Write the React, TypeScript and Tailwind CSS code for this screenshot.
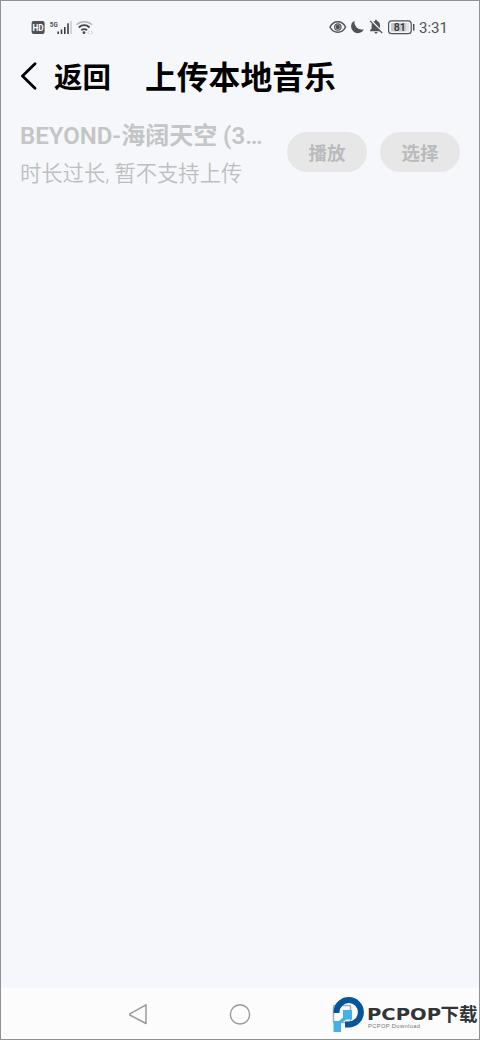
function StatusBar() {
  return (
    <header className="flex h-[52px] items-center pr-[31px] pl-[30px] text-[#505257]">
      <svg className="h-[18px] w-[64px]" viewBox="0 -2.5 64 18" fill="none">
        <rect x="0.6" y="0.4" width="13" height="13" rx="2" fill="#505257" />
        <text x="1.5" y="10.5" textLength="11.2" lengthAdjust="spacingAndGlyphs" className="fill-white font-['Roboto'] text-[9.5px] font-bold">HD</text>
        <text x="18.8" y="6" textLength="8" lengthAdjust="spacingAndGlyphs" className="fill-[#505257] font-['Roboto'] text-[8px] font-bold">5G</text>
        <path d="M27.2 11v2.6M30.5 9v4.6M33.8 6.4v7.2M37 2.8v10.8" stroke="#3b3d41" strokeWidth="1.6" />
        <path d="M40 .6v13" stroke="#c4c5c9" strokeWidth="1.4" />
        <path d="M45.5 4.2c4.5-4.1 11-4.1 15.5 0" stroke="#b3b5b8" strokeWidth="1.5" />
        <path d="M47.8 7c3.2-3 7.6-3 10.8 0M50.3 9.8c1.8-1.5 4-1.5 5.8 0" stroke="#46484c" strokeWidth="1.8" />
        <circle cx="53" cy="12.2" r="1.4" fill="#46484c" />
        <path d="M58.5 10.5l-2 1.6 2 1.5M60 10.5l1.8 1.6-1.8 1.5" stroke="#c0c2c5" strokeWidth=".8" />
      </svg>
      <div className="flex-1" />
      <svg className="mr-[4px] h-[16px] w-[86px]" viewBox="0 0 86 16" fill="none">
        <path d="M1 8c3.5-7 12.1-7 15.6 0C13.1 15 4.5 15 1 8Z" stroke="#505257" strokeWidth="1.5" />
        <circle cx="8.8" cy="8" r="3.2" stroke="#505257" strokeWidth="1.2" />
        <circle cx="8.8" cy="8" r="2.2" fill="#505257" />
        <path d="M25.6 1.4a6.8 6.8 0 1 0 9.4 8.9A7.6 7.6 0 0 1 25.6 1.4Z" fill="#505257" />
        <path d="M41.2 12.2v-1.3l1.4-1.4V6.2c0-.8.2-1.4.5-2l8.1 8Zm8.8-4-5.5-5.4c.6-.4 1.1-.6 1.7-.7V.8h1.6v1.3c2 .5 3.2 2.1 3.2 4.1v3ZM45.5 13h3c0 2-3 2-3 0Z" fill="#505257" />
        <path d="m41 1.8 12.2 12.2" stroke="#505257" strokeWidth="1.2" />
        <rect x="59.6" y="1.8" width="22.6" height="12.9" rx="3" stroke="#505257" strokeWidth="1.2" />
        <rect x="62" y="4" width="15.5" height="8.5" rx="1" fill="#c8c9cc" />
        <rect x="77.5" y="4" width="2.5" height="8.5" fill="#e3e4e6" />
        <text x="64.8" y="12" textLength="12" lengthAdjust="spacingAndGlyphs" className="fill-[#35373b] font-['Roboto'] text-[11px] font-semibold">81</text>
        <path d="M84.7 5v6.6" stroke="#505257" strokeWidth="1.5" />
      </svg>
      <span className="w-[29px] pt-px font-['Roboto',sans-serif] text-[15px] leading-4 whitespace-nowrap">3:31</span>
    </header>
  );
}

function PillButton({ label }: { label: string }) {
  return (
    <button className="flex h-10 w-20 items-center justify-center rounded-full bg-[#e7e7e8] font-['Noto_Sans_CJK_SC',sans-serif] text-[18.5px] leading-none font-bold text-[#b9babb]">
      {label}
    </button>
  );
}

function TrackRow() {
  return (
    <section className="flex h-[100px] items-center px-[19px]">
      <div className="mr-5 w-[247px] pt-[6px]">
        <p className="h-[37px] text-[24px] leading-[37px] font-semibold whitespace-nowrap text-[#c4c5c6] font-['Roboto','Noto_Sans_CJK_SC',sans-serif]">BEYOND-海阔天空 (3…</p>
        <p className="h-[37px] text-[21.3px] leading-[37px] font-[350] whitespace-nowrap text-[#bdbebf] font-['Roboto','Noto_Sans_CJK_SC',sans-serif]">时长过长, 暂不支持上传</p>
      </div>
      <div className="flex gap-[13px]">
        <PillButton label="播放" />
        <PillButton label="选择" />
      </div>
    </section>
  );
}

function Brand() {
  return (
    <svg className="h-[38px] w-[148px]" viewBox="330 996 148 38" fill="none">
      <rect x="333.5" y="1005.5" width="17" height="17" rx="1" stroke="#aaa" strokeWidth="1.5" />
      <path d="M336.5 1013v-1a12.2 12.2 0 1 1 12.2 12.5h-3.7" stroke="#07559b" strokeWidth="6" />
      <path d="M343 1010h9v9.5h-5.5l-5.5 3.5v9h-7.5v-11h5.5l4-3.5Z" fill="#43b1e8" />
      <text x="367" y="1020" textLength="74" lengthAdjust="spacingAndGlyphs" className="fill-[#333437] font-['DejaVu_Sans'] text-[16.5px] font-bold">PCPOP</text>
      <text x="440.5" y="1020.6" textLength="37" lengthAdjust="spacingAndGlyphs" className="fill-[#333437] font-['Noto_Sans_CJK_SC'] text-[18.3px] font-bold">下载</text>
      <text x="368" y="1027.6" textLength="52" className="fill-[#75777a] font-['Liberation_Sans'] text-[5.8px]">PCPOP Download</text>
    </svg>
  );
}

export default function App() {
  return (
    <main className="flex h-[1040px] w-[480px] flex-col border border-[#919295] bg-[#f5f7fa]">
      <StatusBar />
      <nav className="flex h-[46px] items-center text-black font-['Noto_Sans_CJK_SC',sans-serif] font-bold">
        <svg className="ml-[19px] h-[28px] w-[18px]" viewBox="0 0 18 28" fill="none">
          <path d="M15 1.8 2.5 14 15 26.2" stroke="currentColor" strokeWidth="2.8" strokeLinecap="round" strokeLinejoin="round" />
        </svg>
        <button className="ml-[16px] w-[91px] pb-px text-left text-[28.5px] leading-[45px]">返回</button>
        <h1 className="pb-[2px] text-[31.8px] leading-[44px] font-bold whitespace-nowrap">上传本地音乐</h1>
      </nav>
      <div className="pt-[3px]">
        <TrackRow />
      </div>
      <div className="flex-1" />
      <footer className="flex h-[51px] items-center bg-[#fcfcfd]">
        <svg className="ml-[127px] h-[24px] w-[22px]" viewBox="0 0 22 24" fill="none">
          <path d="M18 2.9v18.6L1.8 13v-1.2Z" stroke="#999" strokeWidth="1.5" strokeLinejoin="round" />
        </svg>
        <svg className="ml-[79px] h-[24px] w-[24px]" viewBox="0 0 24 24" fill="none">
          <circle cx="11" cy="12.4" r="9.6" stroke="#999" strokeWidth="1.4" />
        </svg>
        <div className="ml-[77px] pt-[3px]">
          <Brand />
        </div>
      </footer>
    </main>
  );
}
